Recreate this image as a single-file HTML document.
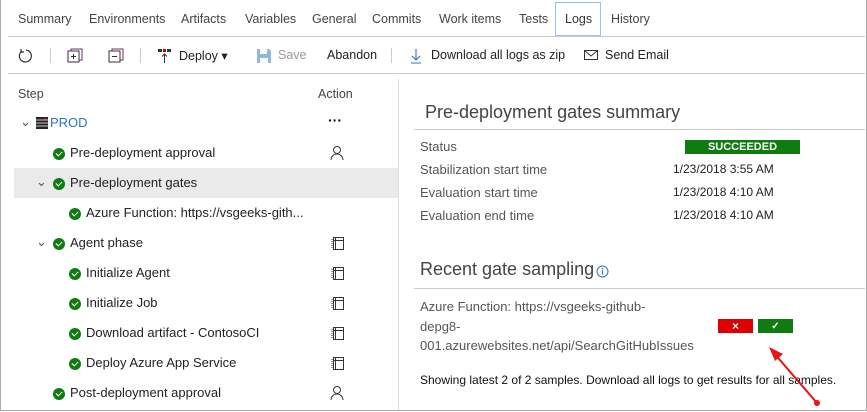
<!DOCTYPE html><html><head><style>
body{margin:0;width:867px;height:412px;overflow:hidden;background:#fff;font-family:"Segoe UI","Liberation Sans",sans-serif;position:relative}
.a{position:absolute;white-space:nowrap}
.t{font-size:12.5px;color:#444;top:12px}
.tb{font-size:12.5px;color:#222;top:48px}
.row{font-size:13px;color:#222}
.ck{position:absolute;width:12px;height:12px;border-radius:50%;background:#107c10}
.ck:after{content:"";position:absolute;left:3px;top:2.5px;width:5px;height:3px;border-left:1.6px solid #fff;border-bottom:1.6px solid #fff;transform:rotate(-45deg)}
.k{font-size:13px;color:#555}
.v{font-size:12px;color:#222}
.btn{position:absolute;width:35px;height:14px;display:flex;align-items:center;justify-content:center;color:#fff;font-weight:bold}
</style></head><body>
<div class="a" style="left:0;top:0;width:865px;height:410px;border:1px solid #aaa;border-top:none"></div>
<div class="a t" style="left:18px">Summary</div>
<div class="a t" style="left:89px">Environments</div>
<div class="a t" style="left:181px">Artifacts</div>
<div class="a t" style="left:245px">Variables</div>
<div class="a t" style="left:312px">General</div>
<div class="a t" style="left:372px">Commits</div>
<div class="a t" style="left:439px">Work items</div>
<div class="a t" style="left:519px">Tests</div>
<div class="a" style="left:555px;top:2px;width:44px;height:32px;border:1px solid #9cc0ee"></div>
<div class="a t" style="left:565px;color:#333">Logs</div>
<div class="a t" style="left:611px">History</div>
<div class="a" style="left:8px;top:36px;width:857px;height:1px;background:#ccc"></div>
<svg class="a" style="left:18px;top:48px" width="16" height="16"><path d="M4 3 A6 6 0 1 0 8 2" fill="none" stroke="#333" stroke-width="1.2"/><path d="M3 1v3h3" fill="none" stroke="#333" stroke-width="1.2"/></svg>
<div class="a" style="left:50px;top:48px;width:1px;height:15px;background:#ccc"></div>
<svg class="a" style="left:67px;top:48px" width="16" height="16"><rect x="1" y="3" width="11" height="11" fill="none" stroke="#333"/><path d="M4 3V1h11v11h-3" fill="none" stroke="#6b2d6b"/><path d="M6.5 6v5M4 8.5h5" stroke="#333"/></svg>
<svg class="a" style="left:108px;top:48px" width="16" height="16"><rect x="1" y="3" width="11" height="11" fill="none" stroke="#333"/><path d="M4 3V1h11v11h-3" fill="none" stroke="#6b2d6b"/><path d="M4 8.5h5" stroke="#333"/></svg>
<div class="a" style="left:140px;top:48px;width:1px;height:15px;background:#ccc"></div>
<svg class="a" style="left:157px;top:48px" width="16" height="16"><rect x="1" y="1" width="4" height="3" fill="#333"/><rect x="10" y="1" width="4" height="3" fill="#333"/><rect x="6" y="1" width="3" height="3" fill="#c00"/><path d="M7.5 15V6M5 8.5l2.5-2.5 2.5 2.5" fill="none" stroke="#333"/></svg>
<div class="a tb" style="left:179px">Deploy ▾</div>
<svg class="a" style="left:256px;top:48px" width="16" height="16"><path d="M1 1h12l2 2v12H1z" fill="#8fb8e0"/><rect x="4" y="1" width="7" height="5" fill="#fff"/><rect x="4" y="10" width="8" height="5" fill="#fff"/></svg>
<div class="a tb" style="left:278px;color:#999">Save</div>
<div class="a tb" style="left:327px">Abandon</div>
<div class="a" style="left:391px;top:48px;width:1px;height:15px;background:#ccc"></div>
<svg class="a" style="left:409px;top:48px" width="14" height="16"><path d="M7 1v11M3 8l4 4 4-4M2 15h10" fill="none" stroke="#2a74c4" stroke-width="1.1"/></svg>
<div class="a tb" style="left:431px">Download all logs as zip</div>
<svg class="a" style="left:584px;top:50px" width="15" height="11"><rect x="0.5" y="0.5" width="13" height="9" fill="none" stroke="#333"/><path d="M1 1l6 5 6-5" fill="none" stroke="#333"/></svg>
<div class="a tb" style="left:605px">Send Email</div>
<div class="a" style="left:8px;top:73px;width:857px;height:1px;background:#ccc"></div>
<div class="a" style="left:398px;top:79px;width:1px;height:331px;background:#ddd"></div>
<div class="a" style="left:18px;top:87px;font-size:12.5px;color:#444">Step</div>
<div class="a" style="left:318px;top:87px;font-size:12.5px;color:#444">Action</div>
<div class="a" style="left:14px;top:168px;width:384px;height:30px;background:#eaeaea"></div>
<div class="a row" style="left:20px;top:114px;color:#555">⌄</div>
<svg class="a" style="left:36px;top:117px" width="12" height="12"><rect width="12" height="12" fill="#222"/><path d="M0 3h12M0 6h12M0 9h12" stroke="#fff" stroke-width="0.8"/><rect x="8" y="1" width="3" height="1.5" fill="#c00"/></svg>
<div class="a row" style="left:50px;top:115px;color:#2a74c4">PROD</div>
<div class="a" style="left:328px;top:112px;font-size:14px;font-weight:bold">···</div>
<div class="ck" style="left:53px;top:148px"></div><div class="a row" style="left:70px;top:145px">Pre-deployment approval</div>
<svg class="a" style="left:330px;top:145px" width="14" height="16"><circle cx="7" cy="5" r="3.5" fill="none" stroke="#333"/><path d="M1 15a6 6 0 0 1 12 0" fill="none" stroke="#333"/></svg>
<div class="a row" style="left:36px;top:174px;color:#555">⌄</div>
<div class="ck" style="left:53px;top:178px"></div><div class="a row" style="left:70px;top:175px">Pre-deployment gates</div>
<div class="ck" style="left:69px;top:208px"></div><div class="a row" style="left:86px;top:205px">Azure Function: https://vsgeeks-gith...</div>
<div class="a row" style="left:36px;top:234px;color:#555">⌄</div>
<div class="ck" style="left:53px;top:238px"></div><div class="a row" style="left:70px;top:235px">Agent phase</div>
<div class="ck" style="left:69px;top:268px"></div><div class="a row" style="left:86px;top:265px">Initialize Agent</div>
<div class="ck" style="left:69px;top:298px"></div><div class="a row" style="left:86px;top:295px">Initialize Job</div>
<div class="ck" style="left:69px;top:328px"></div><div class="a row" style="left:86px;top:325px">Download artifact - ContosoCI</div>
<div class="ck" style="left:69px;top:358px"></div><div class="a row" style="left:86px;top:355px">Deploy Azure App Service</div>
<div class="ck" style="left:53px;top:388px"></div><div class="a row" style="left:70px;top:385px">Post-deployment approval</div>
<svg class="a" style="left:330px;top:385px" width="14" height="16"><circle cx="7" cy="5" r="3.5" fill="none" stroke="#333"/><path d="M1 15a6 6 0 0 1 12 0" fill="none" stroke="#333"/></svg>
<svg width="0" height="0" style="position:absolute"><defs><g id="bk"><rect x="2.5" y="0.5" width="10" height="12" fill="none" stroke="#333"/><path d="M2.5 3.5h10M4.5 0.5v12" stroke="#333"/><path d="M1 2v9" stroke="#333" stroke-dasharray="1 1"/></g></defs></svg>
<svg class="a" style="left:331px;top:237px" width="13" height="13"><use href="#bk"/></svg>
<svg class="a" style="left:331px;top:267px" width="13" height="13"><use href="#bk"/></svg>
<svg class="a" style="left:331px;top:297px" width="13" height="13"><use href="#bk"/></svg>
<svg class="a" style="left:331px;top:327px" width="13" height="13"><use href="#bk"/></svg>
<svg class="a" style="left:331px;top:357px" width="13" height="13"><use href="#bk"/></svg>
<div class="a" style="left:425px;top:102px;font-size:18px;color:#444">Pre-deployment gates summary</div>
<div class="a" style="left:414px;top:129px;width:451px;height:1px;background:#ccc"></div>
<div class="a k" style="left:420px;top:139px">Status</div>
<div class="a" style="left:685px;top:140px;width:115px;height:14px;background:#107c10;color:#fff;font-size:11px;font-weight:bold;text-align:center;line-height:14px">SUCCEEDED</div>
<div class="a k" style="left:420px;top:162px">Stabilization start time</div><div class="a v" style="left:673px;top:162px">1/23/2018 3:55 AM</div>
<div class="a k" style="left:420px;top:185px">Evaluation start time</div><div class="a v" style="left:673px;top:185px">1/23/2018 4:10 AM</div>
<div class="a k" style="left:420px;top:208px">Evaluation end time</div><div class="a v" style="left:673px;top:208px">1/23/2018 4:10 AM</div>
<div class="a" style="left:420px;top:259px;font-size:18px;color:#444">Recent gate sampling</div>
<svg class="a" style="left:596px;top:265px" width="13" height="13"><circle cx="6.5" cy="6.5" r="5.5" fill="none" stroke="#2a74c4"/><path d="M6.5 5.5v4" stroke="#2a74c4" stroke-width="1.2"/><circle cx="6.5" cy="3.7" r="0.8" fill="#2a74c4"/></svg>
<div class="a" style="left:414px;top:288px;width:451px;height:1px;background:#ccc"></div>
<div class="a k" style="left:420px;top:297px;line-height:19.5px;white-space:normal;width:300px">Azure Function: https://vsgeeks-github-<br>depg8-<br>001.azurewebsites.net/api/SearchGitHubIssues</div>
<div class="btn" style="left:718px;top:319px;background:#d00;font-size:12px">×</div>
<div class="btn" style="left:758px;top:319px;background:#107c10;font-size:10px">✓</div>
<div class="a" style="left:420px;top:373px;font-size:12px;color:#111">Showing latest 2 of 2 samples. Download all logs to get results for all samples.</div>
<svg class="a" style="left:760px;top:340px" width="70" height="72"><path d="M57 63L13 12" stroke="#e11" stroke-width="2"/><path d="M9 7l14 7-8 7z" fill="#e11"/><circle cx="57" cy="63" r="3" fill="#e11"/></svg>
</body></html>
